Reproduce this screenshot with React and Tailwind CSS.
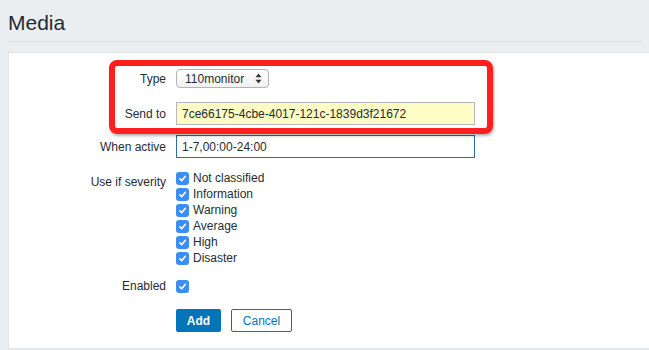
import React from "react";

const font = { fontFamily: '"Liberation Sans", Arial, sans-serif' };

function Check() {
  return (
    <span className="inline-flex h-[13px] w-[13px] shrink-0 items-center justify-center rounded-[3px] bg-[#3b8ff2]">
      <svg width="9" height="9" viewBox="0 0 10 10" fill="none">
        <path d="M2 5.3 L4.1 7.4 L8.2 2.6" stroke="#fff" strokeWidth="1.7" strokeLinecap="round" strokeLinejoin="round" />
      </svg>
    </span>
  );
}

function Row({ label, children, className = "", labelClass = "" }) {
  return (
    <div className={"flex " + className}>
      <div className={"w-[157px] shrink-0 text-right text-[12px] text-[#1f2c33] " + labelClass}>{label}</div>
      <div className="ml-[10px] flex-1">{children}</div>
    </div>
  );
}

export default function App() {
  const sev = ["Not classified", "Information", "Warning", "Average", "High", "Disaster"];
  return (
    <div className="relative min-h-[350px] overflow-hidden bg-[#ebeef1]" style={font}>
      <div className="mx-2 border-b border-[#dde2e6] pt-[10px] pb-[6px]">
        <h1 className="text-[21px] leading-[25px] text-[#1f2c33]">Media</h1>
      </div>
      <div className="ml-2 mt-[10px] h-[297px] border border-r-0 border-[#dfe4e7] bg-white">
        <Row label="Type" className="mt-[16px] h-[19px] items-center">
          <div className="flex h-[19px] w-[93px] items-center justify-between rounded-[4px] border border-[#b3b3b3] bg-gradient-to-b from-white to-[#f1f1f1] pl-[8px] pr-[6px] text-[12px] text-[#1f2c33]">
            <span>110monitor</span>
            <svg width="7" height="11" viewBox="0 0 7 11">
              <path d="M3.5 0.5 L6.5 4.3 L0.5 4.3 Z" fill="#333" />
              <path d="M3.5 10.5 L6.5 6.7 L0.5 6.7 Z" fill="#333" />
            </svg>
          </div>
        </Row>
        <Row label="Send to" className="mt-[14px] h-[23px] items-center">
          <div className="flex h-[23px] w-[299px] items-center border border-[#b3b9bd] bg-[#fcfcc4] pl-[5px] text-[12px] text-[#1f2c33]">
            7ce66175-4cbe-4017-121c-1839d3f21672
          </div>
        </Row>
        <Row label="When active" className="mt-[10px] h-[23px] items-center">
          <div className="flex h-[23px] w-[299px] items-center border border-[#2b6ea3] bg-white pl-[5px] text-[12px] text-[#1f2c33]">
            1-7,00:00-24:00
          </div>
        </Row>
        <Row label="Use if severity" className="mt-[12px]" labelClass="pt-[4px] leading-[16px]">
          <div className="flex flex-col">
            {sev.map((s) => (
              <div key={s} className="flex h-[16px] items-center gap-[4px] text-[12px] text-[#1f2c33]">
                <Check />
                <span>{s}</span>
              </div>
            ))}
          </div>
        </Row>
        <Row label="Enabled" className="mt-[12px] h-[16px] items-center" labelClass="leading-[16px]">
          <div className="flex h-[16px] items-center">
            <Check />
          </div>
        </Row>
        <Row label="" className="mt-[15px]">
          <div className="flex gap-[10px]">
            <button className="h-[23px] w-[45px] rounded-[2px] bg-[#0275b8] text-[12px] font-bold text-white">Add</button>
            <button className="h-[23px] w-[61px] rounded-[2px] border border-[#0275b8] bg-white text-[12px] text-[#0275b8]">Cancel</button>
          </div>
        </Row>
      </div>
      <div className="pointer-events-none absolute left-[109px] top-[60px] h-[74px] w-[384px] rounded-[8px] border-[6px] border-[#ff1f1f] shadow-[1px_2px_3px_rgba(0,0,0,0.3)]" />
    </div>
  );
}
